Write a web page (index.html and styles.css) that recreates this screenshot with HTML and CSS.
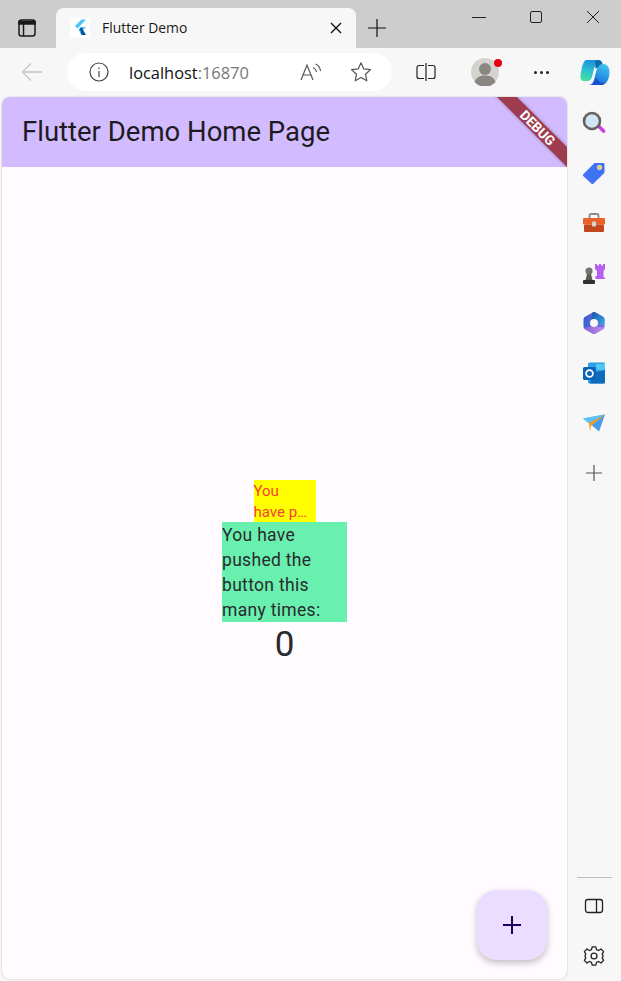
FILE: index.html
```html
<!DOCTYPE html>
<html>
<head>
    <title>Flutter Demo</title>
    <link rel="stylesheet" href="styles.css">
</head>
<body>
    <div class="tabstrip">
        <div class="tab-actions">
            <svg width="18" height="18" viewBox="0 0 18 18" fill="none" stroke="#1a1a1a" stroke-width="1.5"><rect x="1" y="1" width="16" height="16" rx="2.5"/><path d="M1 2.5h16V5H1z" fill="#1a1a1a"/><path d="M5.5 5v12"/></svg>
        </div>
        <div class="tab">
            <div class="favicon">
                <svg width="20" height="20" viewBox="0 0 20 20"><path d="M11.500 1.500H16L7.500 10.500 5 8z" fill="#47c5fb"/><path d="M11.500 9H16L11.500 13.500l-2.300-2.200z" fill="#47c5fb"/><path d="M9.200 11.300l2.300-2.300 4.500 8h-4.500z" fill="#00569e"/><path d="M9.200 11.300l2.300 2.200-1.600 1.200z" fill="#00b5f8"/></svg>
            </div>
            <span class="tab-title">Flutter Demo</span>
            <svg class="tab-close" width="12" height="12" viewBox="0 0 12 12" stroke="#111" stroke-width="1.4"><path d="M1 1l10 10M11 1L1 11"/></svg>
        </div>
        <svg class="new-tab" width="18" height="18" viewBox="0 0 18 18" stroke="#111" stroke-width="1.200"><path d="M9 0v18M0 9h18"/></svg>
        <div class="window-controls">
            <svg width="14" height="14" viewBox="0 0 14 14" stroke="#222" stroke-width="1"><path d="M0 7.500h14"/></svg>
            <svg width="14" height="14" viewBox="0 0 14 14" fill="none" stroke="#222" stroke-width="1"><rect x="1.500" y="1.500" width="11" height="11" rx="1.500"/></svg>
            <svg width="14" height="14" viewBox="0 0 14 14" stroke="#222" stroke-width="1"><path d="M1 1l12 12M13 1L1 13"/></svg>
        </div>
    </div>

    <div class="toolbar">
        <svg class="back" width="22" height="20" viewBox="0 0 22 20" fill="none" stroke="#c4c4c4" stroke-width="1.300"><path d="M21 10H1.500M10 1.500L1.500 10l8.500 8.500"/></svg>
        <div class="address">
            <svg width="20" height="20" viewBox="0 0 20 20" fill="none" stroke="#444" stroke-width="1.200"><circle cx="10" cy="10" r="9"/><path d="M10 9v6M10 5.500v1.500"/></svg>
            <div class="url">localhost<span class="port">:16870</span></div>
            <svg class="read-aloud" width="22" height="20" viewBox="0 0 22 20" fill="none" stroke="#555" stroke-width="1.200"><path d="M1 18L7 3l6 15M3.200 13h7.600"/><path d="M13 5.500c2 .8 3.200 2.500 3.600 4.500M15.500 2c3 1.200 4.700 3.800 5 7"/></svg>
            <svg class="star" width="22" height="22" viewBox="0 0 22 22" fill="none" stroke="#555" stroke-width="1.200" stroke-linejoin="round"><path d="M11 1.800l2.800 6.100 6.600.8-4.900 4.500 1.300 6.600L11 16.500l-5.800 3.300 1.300-6.600L1.600 8.700l6.600-.8z"/></svg>
        </div>
        <svg class="split" width="20" height="20" viewBox="0 0 20 20" fill="none" stroke="#222" stroke-width="1.200"><path d="M8 3.500H3a2 2 0 0 0-2 2v9a2 2 0 0 0 2 2h5M12 3.500h5a2 2 0 0 1 2 2v9a2 2 0 0 1-2 2h-5M10 1v18"/></svg>
        <div class="profile">
            <svg width="28" height="28" viewBox="0 0 28 28"><circle cx="14" cy="14" r="14" fill="#d5d3d0"/><circle cx="14" cy="11" r="6" fill="#8a8783"/><path d="M3.500 24c1.500-4.500 5.500-6.500 10.500-6.500s9 2 10.500 6.500a14 14 0 0 1-21 0z" fill="#8a8783"/></svg>
            <span class="profile-dot"></span>
        </div>
        <div class="more"><span></span><span></span><span></span></div>
        <svg class="copilot" width="30" height="27" viewBox="0 0 30 27">
            <defs>
                <linearGradient id="cp1" x1="0.500" y1="0" x2="0.300" y2="1"><stop offset="0" stop-color="#1f8fdc"/><stop offset="0.500" stop-color="#2cc0d0"/><stop offset="1" stop-color="#45e0a0"/></linearGradient>
                <linearGradient id="cp2" x1="0.700" y1="0" x2="0.300" y2="1"><stop offset="0" stop-color="#3fc4f0"/><stop offset="1" stop-color="#1668e0"/></linearGradient>
            </defs>
            <path d="M7 1h13l-3 3c-1.500 1.500-2.500 4-3.300 7l-1.700 7c-.6 2-2 4-4.500 4H4.500C1.500 22 0 20 .5 16.500 1.500 9 3 1 7 1z" fill="url(#cp1)"/>
            <path d="M15 2c2-1 4-1.500 5.500-.5 1.500 1 2.500 4 3 7.500h-7l-1 1z" fill="#0f6aa8"/>
            <path d="M23 5c4 0 6.500 3 6.500 8 0 6-2.500 13-8 13H8.500c2.500 0 4.500-1.500 5.500-5l2-8c.8-3 2.500-8 7-8z" fill="url(#cp2)"/>
            <path d="M13 26h8.500c1.500 0 2.500-1 3.500-2.500-2 .5-4 .5-5.500-.5L16 19l-2 3c-.5 1.500-1 3-1 4z" fill="#1a4fd0"/>
        </svg>
    </div>

    <div class="main">
        <div class="page">
            <div class="appbar">
                <span class="appbar-title">Flutter Demo Home Page</span>
                <div class="debug-banner">DEBUG</div>
            </div>
            <div class="page-body">
                <div class="counter">
                    <div class="small-text">You<br>have p…</div>
                    <div class="green-text">You have pushed the button this many times:</div>
                    <div class="count">0</div>
                </div>
            </div>
            <div class="fab">
                <svg width="20" height="20" viewBox="0 0 20 20" stroke="#21005d" stroke-width="2"><path d="M10 1v18M1 10h18"/></svg>
            </div>
        </div>

        <div class="sidebar">
            <svg width="24" height="24" viewBox="0 0 24 24">
                <path d="M14 15l3-2 6 6c1 1 0 3-2 3z" fill="#c93fe6"/>
                <circle cx="10" cy="10" r="8" fill="#cfe6f5" stroke="#66625f" stroke-width="2.600"/>
            </svg>
            <svg width="24" height="24" viewBox="0 0 24 24">
                <path d="M1.500 13L12 2.500c.5-.5 1-.5 1.500-.5H21c1 0 1.500.5 1.500 1.500V11c0 .6-.2 1-.5 1.300L11.500 22.500c-.7.7-1.500.7-2.200 0l-7.800-7.300c-.7-.7-.7-1.500 0-2.200z" fill="#3f72f5"/>
                <circle cx="17.500" cy="6.500" r="2.200" fill="#f3cd3f" stroke="#fff" stroke-width=".6"/>
            </svg>
            <svg width="24" height="24" viewBox="0 0 24 24">
                <path d="M7.500 7V4.500c0-1 .5-1.500 1.500-1.500h6c1 0 1.500.5 1.500 1.500V7" fill="none" stroke="#8a8a8a" stroke-width="1.800"/>
                <rect x="1" y="7" width="22" height="6.500" rx="1" fill="#e8622a"/>
                <rect x="2" y="13.500" width="20" height="7.500" rx="1" fill="#c2481c"/>
                <rect x="10" y="10.500" width="4" height="5" rx=".8" fill="#d8d4d0"/>
            </svg>
            <svg width="24" height="24" viewBox="0 0 24 24">
                <path d="M13 3h2v1.500h2V3h2v1.500h2V3h2v5l-1.500 2v6.500H23v1.500H13.500v-3H15v-5l-2-2z" fill="#b45ff2"/>
                <circle cx="7" cy="10" r="3.600" fill="#77736e"/>
                <path d="M5 13h4l1.500 6h-7z" fill="#5e5b57"/>
                <rect x="1" y="19" width="12" height="4" rx="1" fill="#33312f"/>
            </svg>
            <svg width="24" height="24" viewBox="0 0 24 24">
                <defs>
                    <linearGradient id="ms1" x1="0" y1="0" x2="1" y2="0"><stop offset="0" stop-color="#3560d0"/><stop offset="1" stop-color="#8a70e0"/></linearGradient>
                    <linearGradient id="ms2" x1="0" y1="0" x2="1" y2="1"><stop offset="0" stop-color="#1c4fa8"/><stop offset="1" stop-color="#3cb0e8"/></linearGradient>
                    <linearGradient id="ms3" x1="0" y1="0" x2="1" y2="0"><stop offset="0" stop-color="#8a60d8"/><stop offset="1" stop-color="#c090e8"/></linearGradient>
                </defs>
                <path d="M10.500 1.500a3 3 0 0 1 3 0l7.500 4.300a3 3 0 0 1 1.500 2.600v7.200a3 3 0 0 1-1.500 2.600l-7.500 4.300a3 3 0 0 1-3 0L3 18.200a3 3 0 0 1-1.500-2.600V8.400A3 3 0 0 1 3 5.800z" fill="url(#ms1)"/>
                <path d="M10.500 1.500a3 3 0 0 1 3 0l7.500 4.300a3 3 0 0 1 1.500 2.600V15l-7-3.500L9 8z" fill="url(#ms2)"/>
                <path d="M2 16.500L12 15.500 22 16.500a3 3 0 0 1-1 1.700l-7.500 4.300a3 3 0 0 1-3 0L3 18.200z" fill="url(#ms3)"/>
                <circle cx="12" cy="12" r="4" fill="#f7f7f7"/>
            </svg>
            <svg width="24" height="24" viewBox="0 0 24 24">
                <rect x="6" y="1.500" width="17" height="21" rx="1.500" fill="#2a9fe8"/>
                <path d="M11 12l12-3v12a1.500 1.500 0 0 1-1.500 1.500H8z" fill="#0f6cbd"/>
                <path d="M14 3h9v6h-9z" fill="#50c8f4"/>
                <rect x="1" y="6" width="13" height="13" rx="1.500" fill="#0a64b8"/>
                <circle cx="7.500" cy="12.500" r="3.400" fill="none" stroke="#fff" stroke-width="1.800"/>
            </svg>
            <svg width="24" height="24" viewBox="0 0 24 24">
                <path d="M1 7.500l22-4-6 17-7-6z" fill="#4a9af0"/>
                <path d="M1 7.500l22-4L7 12z" fill="#5cc2f7"/>
                <path d="M7 12L23 3.500 9 15l-1 5.500z" fill="#f0a020"/>
            </svg>
            <svg class="side-plus" width="16" height="16" viewBox="0 0 16 16" stroke="#555" stroke-width="1.200"><path d="M8 0v16M0 8h16"/></svg>
            <div class="side-bottom">
                <div class="side-rule"></div>
                <svg width="20" height="20" viewBox="0 0 20 20" fill="none" stroke="#222" stroke-width="1.300"><rect x="1.500" y="3.500" width="17" height="13" rx="2.500"/><path d="M12.500 3.500v13"/></svg>
                <svg class="gear" width="22" height="22" viewBox="0 0 24 24" fill="none" stroke="#222" stroke-width="1.400" stroke-linejoin="round"><circle cx="12" cy="12" r="3.200"/><path d="M10 2h4l.7 3 2.300 1 2.700-1.600 2.800 2.800L20.900 10l1.100 2-1.100 2 1.600 2.800-2.800 2.800-2.700-1.600-2.300 1-.7 3h-4l-.7-3-2.300-1-2.700 1.600-2.800-2.800L3.100 14 2 12l1.100-2-1.600-2.800 2.800-2.800L7 6l2.300-1z"/></svg>
            </div>
        </div>
    </div>
</body>
</html>
```

FILE: styles.css
```css
* {
    box-sizing: border-box;
}
html, body {
    height: 100%;
}
body {
    display: flex;
    flex-direction: column;
    margin: 0;
    overflow: hidden;
    background-color: #f7f7f7;
    font-family: "Open Sans", sans-serif;
}
svg {
    display: block;
    flex-shrink: 0;
}

/* tab strip */
.tabstrip {
    display: flex;
    align-items: flex-end;
    height: 48px;
    background-color: #cdcdcd;
}
.tab-actions {
    display: flex;
    justify-content: center;
    align-items: center;
    align-self: center;
    width: 56px;
    padding-right: 2px;
    padding-top: 8px;
}
.tab {
    display: flex;
    align-items: center;
    width: 300px;
    height: 40px;
    padding: 0 14px;
    background-color: #f7f7f7;
    border-radius: 8px 8px 0 0;
}
.favicon {
    width: 20px;
    height: 20px;
    background-color: #fff;
}
.tab-title {
    flex: 1;
    margin-left: 12px;
    padding-bottom: 2px;
    font-size: 13.900px;
    color: #1a1a1a;
}
.new-tab {
    align-self: center;
    margin: 8px 0 0 12px;
}
.window-controls {
    display: flex;
    align-self: flex-start;
    gap: 43px;
    margin-left: auto;
    padding: 10px 21px 0 0;
}

/* toolbar */
.toolbar {
    display: flex;
    align-items: center;
    height: 48px;
    padding: 0 8px 0 21px;
}
.address {
    display: flex;
    align-items: center;
    width: 325px;
    height: 38px;
    margin-left: 24px;
    padding: 0 20px 0 22px;
    background-color: #fff;
    border-radius: 19px;
}
.url {
    margin-left: 20px;
    font-size: 16.400px;
    color: #111;
}
.port {
    color: #777;
}
.read-aloud {
    margin-left: auto;
}
.star {
    margin-left: 28px;
}
.split {
    margin-left: 24px;
}
.profile {
    position: relative;
    margin-left: 35px;
}
.profile-dot {
    position: absolute;
    top: 1px;
    right: -3px;
    width: 8px;
    height: 8px;
    background-color: #e60012;
    border-radius: 50%;
}
.more {
    display: flex;
    gap: 3px;
    margin-left: 35px;
}
.more span {
    width: 3px;
    height: 3px;
    background-color: #222;
    border-radius: 50%;
}
.copilot {
    margin-left: 31px;
}

/* page */
.main {
    display: flex;
    flex: 1;
    min-height: 0;
    padding: 1px 0 2px 2px;
}
.page {
    position: relative;
    display: flex;
    flex-direction: column;
    width: 565px;
    overflow: hidden;
    background-color: #fffbfe;
    border-radius: 8px;
    box-shadow: 0 0 2px rgba(0,0,0,0.25);
    font-family: Roboto, sans-serif;
    color: #1c1b1f;
}
.appbar {
    position: relative;
    display: flex;
    align-items: center;
    height: 70px;
    padding: 0 0 2px 20px;
    overflow: hidden;
    background-color: #d3bbff;
}
.appbar-title {
    font-size: 27.500px;
}
.debug-banner {
    position: absolute;
    top: 23px;
    right: -30px;
    width: 120px;
    height: 14px;
    padding-left: 2px;
    background-color: #a03c50;
    box-shadow: 0 0 4px rgba(0,0,0,0.3);
    transform: rotate(45deg);
    font-size: 13.500px;
    font-weight: 700;
    line-height: 14px;
    text-align: center;
    color: #fff;
}
.page-body {
    display: flex;
    flex: 1;
    justify-content: center;
    align-items: center;
}
.counter {
    display: flex;
    flex-direction: column;
    align-items: center;
}
.small-text {
    width: 62px;
    height: 42px;
    padding-top: 1px;
    background-color: #ffff00;
    font-size: 15px;
    line-height: 21px;
    white-space: nowrap;
    color: #f44336;
}
.green-text {
    width: 125px;
    height: 100px;
    padding-top: 1px;
    background-color: #69f0ae;
    font-size: 17.500px;
    line-height: 25px;
    letter-spacing: 0.31px;
    color: #2a2a2e;
}
.count {
    font-size: 35px;
    line-height: 45px;
    color: #2a2a2e;
}
.fab {
    position: absolute;
    right: 20px;
    bottom: 19px;
    display: flex;
    justify-content: center;
    align-items: center;
    width: 70px;
    height: 70px;
    background-color: #eaddff;
    border-radius: 20px;
    box-shadow: 0 3px 7px rgba(0,0,0,0.25);
}

/* sidebar */
.sidebar {
    display: flex;
    flex: 1;
    flex-direction: column;
    align-items: center;
    gap: 26px;
    padding: 14px 0 12px 0;
}
.side-plus {
    margin-top: 4px;
}
.side-bottom {
    display: flex;
    flex-direction: column;
    align-items: center;
    gap: 17px;
    margin-top: auto;
}
.side-rule {
    width: 35px;
    height: 1px;
    margin-bottom: 1px;
    background-color: #bdbdbd;
}
.gear {
    margin-top: 12px;
}
```
